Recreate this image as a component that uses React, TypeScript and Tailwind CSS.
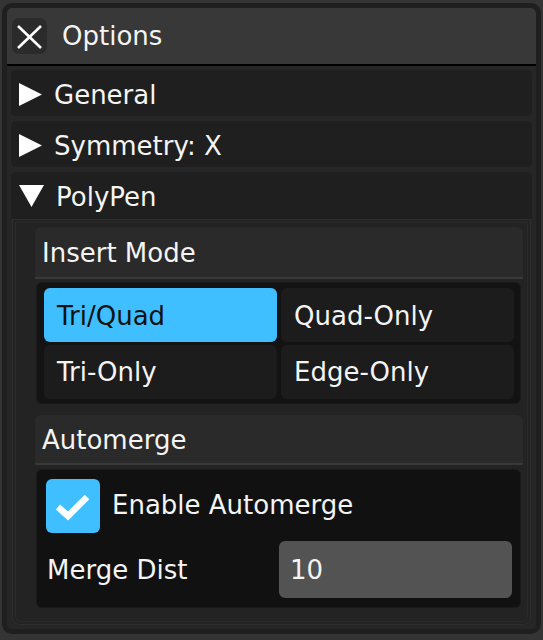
const FONT = "font-['DejaVu_Sans',sans-serif]";

function Arrow({ open }: { open: boolean }) {
  return open ? (
    <svg width="25" height="23" viewBox="0 0 25 23" className="shrink-0 mt-[2px]">
      <polygon points="0,0 25,0 12.5,22" fill="#ffffff" />
    </svg>
  ) : (
    <svg width="23" height="23" viewBox="0 0 23 23" className="shrink-0 mt-[2px]">
      <polygon points="0,0 23,11.5 0,23" fill="#ffffff" />
    </svg>
  );
}

function Header({ label, open = false }: { label: string; open?: boolean }) {
  return (
    <div
      className={`flex items-center h-[48px] mt-[3px] pl-[8px] gap-[12px] bg-[#1f1f1f] border border-[#272727] ${
        open ? "rounded-t-[6px] border-b-0" : "rounded-[6px]"
      }`}
    >
      <Arrow open={open} />
      <span className="text-[26px] text-[#f4f4f4] leading-none pt-[3px]">{label}</span>
    </div>
  );
}

function SubHeader({ label, tall }: { label: string; tall?: boolean }) {
  return (
    <div
      className={`flex items-center pl-[7px] bg-[#2a2a2a] rounded-t-[6px] border-b-2 border-[#393939] ${
        tall ? "h-[52px]" : "h-[50px]"
      }`}
    >
      <span className="text-[26px] text-[#f4f4f4] leading-none pt-[1px]">{label}</span>
    </div>
  );
}

const MODES = ["Tri/Quad", "Quad-Only", "Tri-Only", "Edge-Only"];

export default function App() {
  return (
    <div className={`w-[543px] h-[640px] bg-[#343434] pt-[3px] pl-[2px] ${FONT}`}>
      <div className="w-[539px] h-[631px] rounded-[10px] bg-[#262626] border-[5px] border-[#1f1f1f] flex flex-col overflow-hidden">
        {/* Title bar */}
        <div className="flex items-center h-[58px] shrink-0 bg-[#383838] border-b-2 border-black rounded-t-[5px] pl-[5px] gap-[15px]">
          <div className="w-[35px] h-[36px] rounded-[7px] bg-[#2b2b2b] flex items-center justify-center">
            <svg width="35" height="36" viewBox="0 0 35 36">
              <line x1="6" y1="8" x2="29" y2="30" stroke="#ffffff" strokeWidth="2.6" />
              <line x1="29" y1="8" x2="6" y2="30" stroke="#ffffff" strokeWidth="2.6" />
            </svg>
          </div>
          <span className="text-[26px] text-[#f4f4f4] leading-none pb-[1px]">Options</span>
        </div>

        {/* Body */}
        <div className="flex flex-col px-[3px]">
          <Header label="General" />
          <Header label="Symmetry: X" />
          <Header label="PolyPen" open />

          {/* PolyPen content */}
          <div className="mx-[2px] h-[406px] border border-[#2e2e2e] bg-[#232323] rounded-b-[8px] p-[2px]">
            <div className="h-full border border-[#2a2a2a] rounded-b-[6px] pl-[19px] pr-[4px] pt-[4px]">
              {/* Insert Mode */}
              <SubHeader label="Insert Mode" tall />
              <div className="mt-[3px] ml-[1px] mr-[2px] h-[122px] bg-[#131313] border border-[#1a1a1a] rounded-[6px] grid grid-cols-2 gap-x-[4px] gap-y-[3px] pl-[7px] pr-[6px] pt-[5px] pb-[4px]">
                {MODES.map((m, i) => (
                  <div
                    key={m}
                    className={`h-[54px] rounded-[6px] flex items-center pl-[13px] text-[26px] leading-none ${
                      i === 0 ? "bg-[#3fbfff] text-[#111111]" : "bg-[#1c1c1c] text-[#f4f4f4]"
                    }`}
                  >
                    <span className={i < 2 ? "pt-[1px]" : ""}>{m}</span>
                  </div>
                ))}
              </div>

              {/* Automerge */}
              <div className="mt-[11px]">
                <SubHeader label="Automerge" />
                <div className="mt-[4px] ml-[1px] mr-[2px] h-[139px] bg-[#111111] border border-[#1a1a1a] rounded-[6px] flex flex-col pl-[9px] pr-[8px] pt-[9px]">
                  <div className="flex items-center gap-[12px]">
                    <div className="w-[54px] h-[54px] rounded-[6px] bg-[#3fbfff] flex items-center justify-center">
                      <svg width="54" height="54" viewBox="0 0 54 54">
                        <polyline
                          points="12,28 22,37 41,18"
                          fill="none"
                          stroke="#ffffff"
                          strokeWidth="6.5"
                          strokeLinejoin="miter"
                        />
                      </svg>
                    </div>
                    <span className="text-[26px] text-[#f4f4f4] leading-none pb-[2px]">Enable Automerge</span>
                  </div>
                  <div className="flex items-center justify-between mt-[8px]">
                    <span className="pl-[1px] text-[26px] text-[#f4f4f4] leading-none">Merge Dist</span>
                    <div className="w-[233px] h-[57px] rounded-[6px] bg-[#535353] flex items-center pl-[11px]">
                      <span className="text-[26px] text-[#f4f4f4] leading-none">10</span>
                    </div>
                  </div>
                </div>
              </div>
            </div>
          </div>
        </div>
      </div>
    </div>
  );
}
